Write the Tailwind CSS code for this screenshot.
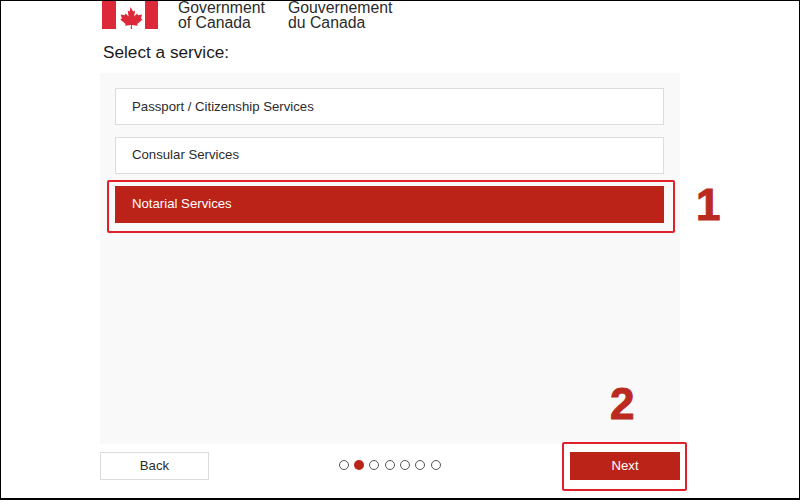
<!DOCTYPE html>
<html>
<head>
<meta charset="utf-8">
<script src="https://cdn.jsdelivr.net/npm/@tailwindcss/browser@4"></script>
</head>
<body class="m-0">
<div class="relative w-[800px] h-[500px] overflow-hidden bg-white border border-black border-b-2 font-['Liberation_Sans',Arial,sans-serif]">
  <div class="absolute left-[101px] top-0">
    <div class="flex items-start h-[29px]">
      <svg width="56" height="28" viewBox="0 0 56 28" class="shrink-0">
        <rect x="0" y="0" width="14" height="28" fill="#dc2838"/>
        <rect x="43" y="0" width="13" height="28" fill="#dc2838"/>
        <path d="M28.5 6l2.6 4.4 2-1-.9 6 3-3 .9 1.9 4-.8-1.2 4 1.7.9-5.4 4.5.6 1.9-6-.8.3 4.9h-1.4l.3-4.9-6 .8.6-1.9-5.4-4.5 1.7-.9-1.2-4 4 .8.9-1.9 3 3-.9-6 2 1z" fill="#dc2838"/>
      </svg>
      <div class="ml-[20px] w-[110px] text-[15.8px] leading-[15px] text-[#2b2b2b] -mt-[1px]">Government<br>of Canada</div>
      <div class="text-[15.8px] leading-[15px] text-[#2b2b2b] -mt-[1px]">Gouvernement<br>du Canada</div>
    </div>
  </div>
  <div class="pl-[102px] pt-[41px] text-[17.2px] leading-[21px] text-[#1a1a1a]">Select a service:</div>
  <div class="absolute left-[99px] top-[72px] w-[580px] h-[371px] bg-[#f9f9f9] pl-[15px] pr-[16px] pt-[15px] flex flex-col gap-[12px]">
    <div class="h-[37px] bg-white border border-[#dcdcdc] pl-[16px] flex items-center text-[13.2px] text-[#2b2b2b]">Passport / Citizenship Services</div>
    <div class="h-[37px] bg-white border border-[#dcdcdc] pl-[16px] pb-[1px] flex items-center text-[13.2px] text-[#2b2b2b]">Consular Services</div>
    <div class="h-[37px] bg-[#bb2218] pl-[17px] pb-[2px] flex items-center text-[13.2px] text-white">Notarial Services</div>
  </div>
  <div class="absolute left-[106px] top-[179px] w-[568px] h-[53px] border-2 border-[#e0202a] rounded-[2px]"></div>
  <div class="absolute left-[695px] top-[179px] text-[44px] leading-[50px] font-bold text-[#bb2a20] [-webkit-text-stroke:1px_#bb2a20]">1</div>
  <div class="absolute left-[609px] top-[378px] text-[44px] leading-[50px] font-bold text-[#bb2a20] [-webkit-text-stroke:1px_#bb2a20]">2</div>
  <div class="absolute left-[99px] top-[451px] w-[109px] h-[28px] bg-white border border-[#dcdcdc] flex items-center justify-center text-[13.2px] text-[#2b2b2b]">Back</div>
  <div class="absolute left-[337.5px] top-[459px] flex gap-[5.4px]">
    <span class="w-[10px] h-[10px] rounded-full border border-[#555]"></span>
    <span class="w-[10px] h-[10px] rounded-full bg-[#bb2218]"></span>
    <span class="w-[10px] h-[10px] rounded-full border border-[#555]"></span>
    <span class="w-[10px] h-[10px] rounded-full border border-[#555]"></span>
    <span class="w-[10px] h-[10px] rounded-full border border-[#555]"></span>
    <span class="w-[10px] h-[10px] rounded-full border border-[#555]"></span>
    <span class="w-[10px] h-[10px] rounded-full border border-[#555]"></span>
  </div>
  <div class="absolute left-[569px] top-[451px] w-[110px] h-[28px] bg-[#bb2218] flex items-center justify-center text-[13.2px] text-white">Next</div>
  <div class="absolute left-[561px] top-[441px] w-[125px] h-[49px] border-2 border-[#e0202a] rounded-[2px]"></div>
</div>
</body>
</html>
